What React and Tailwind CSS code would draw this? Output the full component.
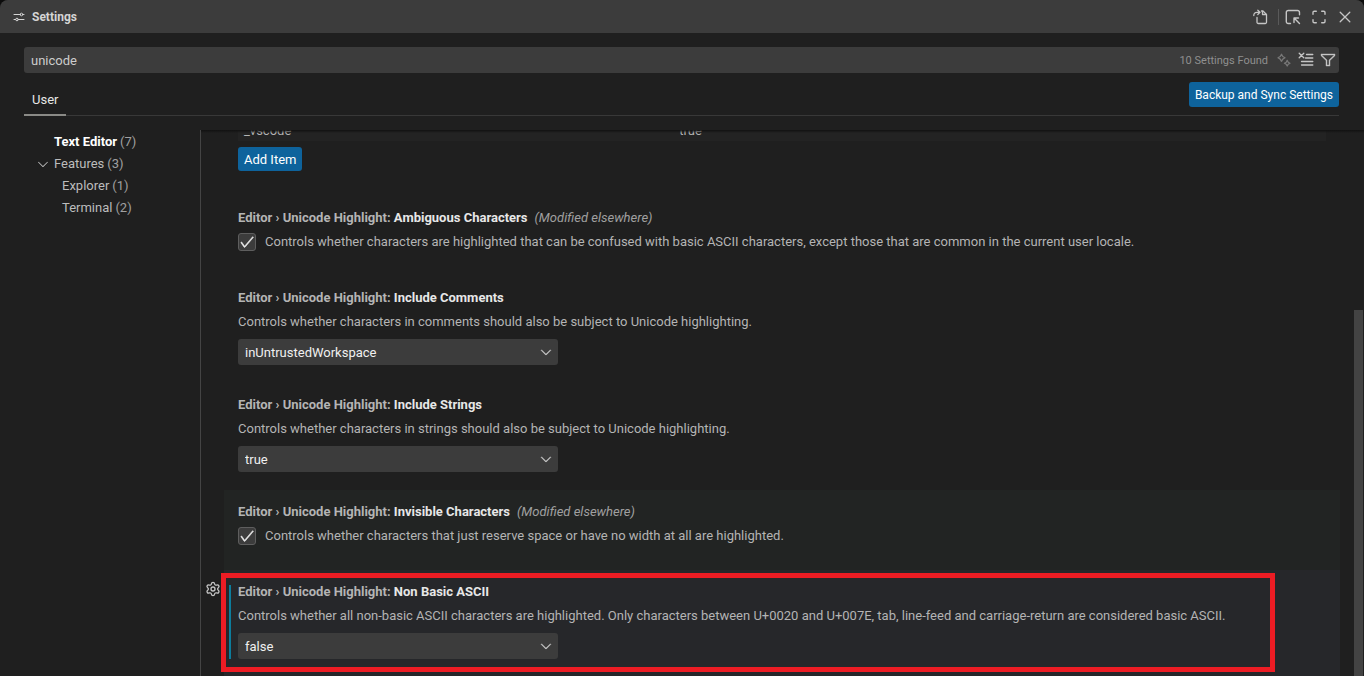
import { useState } from 'react'
import { Settings } from 'lucide-react'
import { VscCheck, VscChevronDown, VscClose, VscFilter } from 'react-icons/vsc'

const settings = [
  {
    id: 'ambiguousCharacters',
    label: 'Ambiguous Characters',
    modified: true,
    type: 'checkbox',
    description:
      'Controls whether characters are highlighted that can be confused with basic ASCII characters, except those that are common in the current user locale.',
  },
  {
    id: 'includeComments',
    label: 'Include Comments',
    type: 'select',
    value: 'inUntrustedWorkspace',
    description: 'Controls whether characters in comments should also be subject to Unicode highlighting.',
  },
  {
    id: 'includeStrings',
    label: 'Include Strings',
    type: 'select',
    value: 'true',
    description: 'Controls whether characters in strings should also be subject to Unicode highlighting.',
  },
  {
    id: 'invisibleCharacters',
    label: 'Invisible Characters',
    modified: true,
    type: 'checkbox',
    hovered: true,
    description: 'Controls whether characters that just reserve space or have no width at all are highlighted.',
  },
  {
    id: 'nonBasicASCII',
    label: 'Non Basic ASCII',
    type: 'select',
    value: 'false',
    focused: true,
    description:
      'Controls whether all non-basic ASCII characters are highlighted. Only characters between U+0020 and U+007E, tab, line-feed and carriage-return are considered basic ASCII.',
  },
]

function IconButton({ label, children }) {
  return (
    <button aria-label={label} className="flex size-4 items-center justify-center text-[#c5c5c5]">
      {children}
    </button>
  )
}

function Icon({ children, strokeWidth = 1.3 }) {
  return (
    <svg
      viewBox="0 0 16 16"
      className="size-4"
      fill="none"
      stroke="currentColor"
      strokeWidth={strokeWidth}
      strokeLinecap="round"
      strokeLinejoin="round"
    >
      {children}
    </svg>
  )
}

function SlidersIcon() {
  return (
    <Icon strokeWidth={1}>
      <path d="M3 5.5h6.5M12.5 5.5h.5M3 10.5h1.5M7.5 10.5H13" />
      <circle cx="10.5" cy="5.5" r="1.3" />
      <circle cx="6" cy="10.5" r="1.3" />
    </Icon>
  )
}

function GoToFileIcon() {
  return (
    <Icon>
      <path d="M9.5 2H11l3.5 3.5v7.7a1.3 1.3 0 0 1-1.3 1.3H6.3A1.3 1.3 0 0 1 5 13.2V8.5" />
      <path d="M10.5 2.3v3.2h3.7" />
      <path d="M1.8 6.5C1.8 4.5 3 3.3 5 3.3h2.5M5.8 1.2 8 3.3 5.8 5.5" />
    </Icon>
  )
}

function InspectIcon() {
  return (
    <Icon strokeWidth={1.4}>
      <path d="M5.5 14.5H3.2a1.9 1.9 0 0 1-1.9-1.9V3.4a1.9 1.9 0 0 1 1.9-1.9h9.4a1.9 1.9 0 0 1 1.9 1.9v2.3" />
      <path d="M9 13.5V9h4.5M9.3 9.3l5.2 5.2" />
    </Icon>
  )
}

function ScreenFullIcon() {
  return (
    <Icon strokeWidth={1.4}>
      <path d="M2 5.3V3.5A1.3 1.3 0 0 1 3.3 2.2h2M10.7 2.2h2A1.3 1.3 0 0 1 14 3.5v1.8M14 10.7v1.8a1.3 1.3 0 0 1-1.3 1.3h-2M5.3 13.8h-2A1.3 1.3 0 0 1 2 12.5v-1.8" />
    </Icon>
  )
}

function SparklesIcon() {
  return (
    <Icon>
      <path d="M5.5 2.2 6.8 4.5 9 5.8 6.8 7.1 5.5 9.3 4.2 7.1 2 5.8 4.2 4.5Z" />
      <path d="M11.2 8.4 12.2 10.2 14 11.2 12.2 12.2 11.2 14 10.2 12.2 8.4 11.2 10.2 10.2Z" />
    </Icon>
  )
}

function ClearSearchIcon() {
  return (
    <Icon>
      <path d="M1.2 1.2l4.6 4.6M5.8 1.2 1.2 5.8M8.5 2.5h6.3M7.5 6h7.3M3.5 9.5h11.3M3.5 13h11.3" />
    </Icon>
  )
}

function TitleBar() {
  return (
    <header className="flex h-[33px] shrink-0 items-center justify-between bg-[#3c3c3c] px-[11px]">
      <div className="flex items-center gap-[5px] text-[#d4d4d4]">
        <SlidersIcon />
        <h1 className="pt-px text-xs font-bold">Settings</h1>
      </div>
      <div className="flex items-center gap-2.5">
        <IconButton label="Open Settings (JSON)"><GoToFileIcon /></IconButton>
        <span className="-mr-1 h-4 w-px bg-[#5a5a5a]" />
        <IconButton label="Inspect"><InspectIcon /></IconButton>
        <IconButton label="Maximize"><ScreenFullIcon /></IconButton>
        <IconButton label="Close">
          <Icon>
            <path d="M3.2 3.2l9.6 9.6M12.8 3.2l-9.6 9.6" />
          </Icon>
        </IconButton>
      </div>
    </header>
  )
}

function SearchBar() {
  const [query, setQuery] = useState('unicode')
  return (
    <div className="flex h-[26px] items-center gap-2 rounded-[3px] bg-[#3c3c3c] pr-[3px] pl-[7px]">
      <input
        aria-label="Search settings"
        value={query}
        onChange={e => setQuery(e.target.value)}
        className="min-w-0 flex-1 bg-transparent pt-0.5 text-[#cccccc] outline-none"
      />
      <span className="pt-0.5 text-[11px] text-[#8f8f8f]">10 Settings Found</span>
      <div className="flex items-center gap-1.5">
        <button aria-label="AI results" className="text-[#777777]"><SparklesIcon /></button>
        <IconButton label="Clear search"><ClearSearchIcon /></IconButton>
        <IconButton label="Filter settings"><VscFilter className="size-4 shrink-0" strokeWidth={0.4} /></IconButton>
      </div>
    </div>
  )
}

function TreeItem({ name, count, className }) {
  return (
    <li>
      <a href="#" className={`flex h-[22px] items-center gap-[3px] ${className}`}>
        {name} <span className="font-normal text-[#a0a0a0]">({count})</span>
      </a>
    </li>
  )
}

function Sidebar() {
  return (
    <nav className="w-[201px] shrink-0 border-r border-[#444444] pt-px text-[#bcbcbc]">
      <ul>
        <TreeItem name="Text Editor" count={7} className="pl-[54px] font-bold text-white" />
        <li className="flex items-center pl-[35px]">
          <VscChevronDown className="size-4" />
          <a href="#" className="flex h-[22px] items-center gap-[3px] pl-[3px]">
            Features <span className="text-[#a0a0a0]">(3)</span>
          </a>
        </li>
        <TreeItem name="Explorer" count={1} className="pl-[62px]" />
        <TreeItem name="Terminal" count={2} className="pl-[62px]" />
      </ul>
    </nav>
  )
}

function SettingTitle({ setting }) {
  return (
    <h2 className="flex h-[18px] items-center gap-[7px] whitespace-nowrap">
      <span className="font-bold text-[#b4b4b4]">
        Editor › Unicode Highlight: <span className="text-[#e7e7e7]">{setting.label}</span>
      </span>
      {setting.modified && <em className="text-[#a0a0a0]">(Modified elsewhere)</em>}
    </h2>
  )
}

function SettingRow({ setting }) {
  const bg = setting.focused ? 'bg-[#26272a]' : setting.hovered ? 'bg-[#222423]' : ''
  return (
    <section className="flex">
      <div className="w-[23px] shrink-0 pt-[11px] pl-1">
        {setting.focused && (
          <button aria-label="More actions" className="text-[#c5c5c5]"><Settings className="size-4" strokeWidth={2} /></button>
        )}
      </div>
      <div className={`relative min-w-0 flex-1 pt-[13px] pl-3.5 ${bg}`}>
        {setting.focused && (
          <>
            <span className="absolute top-[15px] left-[5px] h-[74px] w-0.5 bg-[#0c7d9d]" />
            <span className="pointer-events-none absolute top-[3px] right-[65px] -left-[3px] h-[99px] border-5 border-[#ed1c24]" />
          </>
        )}
        <SettingTitle setting={setting} />
        {setting.type === 'checkbox' ? (
          <label htmlFor={setting.id} className="mt-1.5 mb-[25px] flex h-[18px] items-center gap-[9px] whitespace-nowrap">
            <span className="relative size-[18px] shrink-0">
              <input
                id={setting.id}
                type="checkbox"
                defaultChecked
                className="peer block size-full appearance-none rounded-[3px] border border-[#5e5e5e] bg-[#3c3c3c]"
              />
              <VscCheck strokeWidth={0.6} className="pointer-events-none absolute inset-0 m-auto hidden size-4 text-[#f0f0f0] peer-checked:block" />
            </span>
            {setting.description}
          </label>
        ) : (
          <>
            <label htmlFor={setting.id} className="mt-1.5 flex h-[18px] items-center whitespace-nowrap">
              {setting.description}
            </label>
            <div className="relative mt-2 mb-[18px] w-80">
              <select
                id={setting.id}
                defaultValue={setting.value}
                className="block h-[26px] w-full appearance-none rounded-[3px] bg-[#3c3c3c] pt-0.5 pl-[7px] text-[#f0f0f0]"
              >
                <option>true</option>
                <option>false</option>
                <option>inUntrustedWorkspace</option>
              </select>
              <VscChevronDown strokeWidth={0.3} className="pointer-events-none absolute top-[5px] right-1 size-4 text-[#d0d0d0]" />
            </div>
          </>
        )}
      </div>
    </section>
  )
}

export default function App() {
  return (
    <div className="h-screen bg-[#0c0c0c] font-[Roboto,sans-serif] text-[13px] leading-[18px] text-[#b4b4b4]">
      <div className="flex h-full flex-col overflow-hidden rounded-t-lg bg-[#1f1f1f]">
        <TitleBar />
        <div className="shrink-0 pt-3.5 pr-[25px] pl-6">
          <SearchBar />
          <div className="mt-[9px] flex h-[34px] items-start justify-between border-b border-[#383838]">
            <button className="h-[34px] border-b-2 border-[#8a8a86] px-2 pt-[3px] text-[#e7e7e7]">User</button>
            <button className="h-[25px] rounded-[3px] bg-[#0e639c] px-1.5 pt-px text-xs text-white">Backup and Sync Settings</button>
          </div>
        </div>
        <div className="mt-3.5 flex min-h-0 flex-1">
          <Sidebar />
          <main className="relative min-w-0 flex-1 overflow-hidden pr-6">
            <div className="absolute inset-x-0 top-0 h-[3px] bg-linear-to-b from-[#111111] to-transparent" />
            <div className="-mt-3 pr-3.5 pl-[37px]">
              <table className="w-full table-fixed text-left">
                <tbody>
                  <tr className="h-[23px] bg-[#232323]">
                    <td className="w-[40%] pt-0.5 pl-1.5">_vscode</td>
                    <td className="w-[60%] pt-0.5 pl-1.5">true</td>
                  </tr>
                </tbody>
              </table>
              <button className="mt-1.5 mb-[25px] block h-6 rounded-[3px] bg-[#0e639c] px-1.5 pt-px text-white">Add Item</button>
            </div>
            {settings.map(s => (
              <SettingRow key={s.id} setting={s} />
            ))}
            <div className="absolute right-px bottom-0 h-[67%] w-[9px] bg-[#434343]" />
          </main>
        </div>
      </div>
    </div>
  )
}
